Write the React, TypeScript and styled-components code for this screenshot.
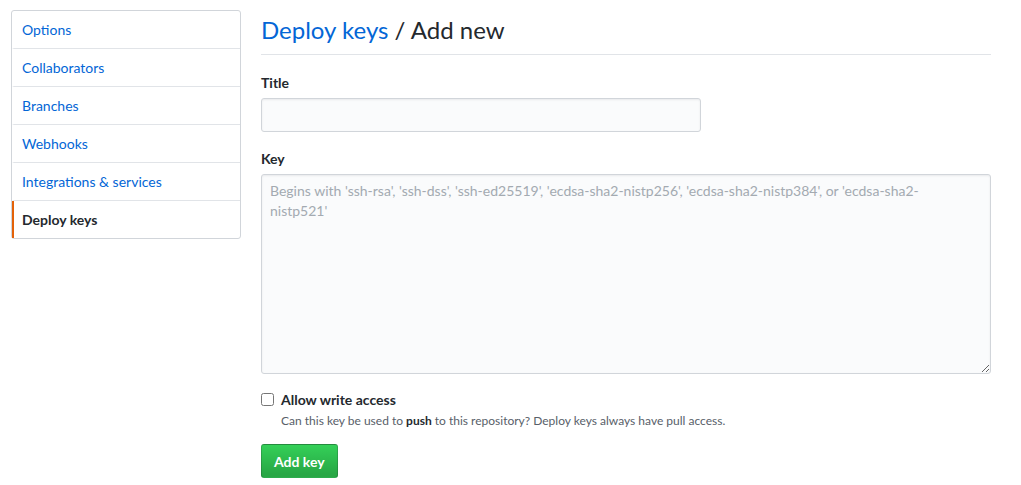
import React from "react";
import styled, { createGlobalStyle } from "styled-components";

const Global = createGlobalStyle`
  html, body { margin: 0; padding: 0; background: #fff; }
  body {
    font-family: Lato, "Noto Sans", Arial, sans-serif;
    font-size: 14px;
    color: #24292e;
  }
  * { box-sizing: border-box; }
`;

const Page = styled.div`
  display: flex;
  align-items: flex-start;
  gap: 20px;
  padding: 10px 30px 0 11px;
  width: 1021px;
`;

const Menu = styled.nav`
  width: 230px;
  flex: none;
  border: 1px solid #d1d5da;
  border-radius: 3px;
  display: flex;
  flex-direction: column;
`;

const MenuItem = styled.a<{ $active?: boolean }>`
  display: block;
  height: 38px;
  line-height: 37px;
  padding: 0 10px 0 8px;
  font-size: 14px;
  text-decoration: none;
  color: ${(p) => (p.$active ? "#24292e" : "#0366d6")};
  font-weight: ${(p) => (p.$active ? 700 : 400)};
  border-bottom: 1px solid #e1e4e8;
  border-left: 2px solid ${(p) => (p.$active ? "#e36209" : "transparent")};
  &:last-child { border-bottom: none; height: 37px; }
`;

const Main = styled.main`
  flex: 1;
  display: flex;
  flex-direction: column;
`;

const Heading = styled.h2`
  margin: 0;
  padding: 4px 0 8px;
  font-size: 24px;
  font-weight: 400;
  line-height: 32px;
  border-bottom: 1px solid #e1e4e8;
  a { color: #0366d6; text-decoration: none; }
`;

const Field = styled.div<{ $gap: number }>`
  margin-top: ${(p) => p.$gap}px;
  display: flex;
  flex-direction: column;
`;

const Label = styled.label`
  font-size: 14px;
  font-weight: 700;
  line-height: 20px;
  margin-bottom: 5px;
`;

const TextInput = styled.input`
  width: 440px;
  height: 34px;
  padding: 6px 8px;
  font: inherit;
  background: #fafbfc;
  border: 1px solid #d1d5da;
  border-radius: 3px;
  box-shadow: inset 0 1px 2px rgba(27, 31, 35, 0.075);
  outline: none;
`;

const TextArea = styled.textarea`
  width: 730px;
  height: 200px;
  padding: 6px 40px 6px 8px;
  font: inherit;
  font-size: 14px;
  line-height: 20px;
  background: #fafbfc;
  border: 1px solid #d1d5da;
  border-radius: 3px;
  box-shadow: inset 0 1px 2px rgba(27, 31, 35, 0.075);
  outline: none;
  resize: vertical;
  &::placeholder { color: #a3aab1; }
`;

const CheckRow = styled.div`
  margin-top: 16px;
  display: grid;
  grid-template-columns: 20px 1fr;
`;

const Check = styled.input`
  margin: 3px 0 0 0;
  width: 13px;
  height: 13px;
`;

const CheckLabel = styled.label`
  font-weight: 700;
  font-size: 14px;
  line-height: 20px;
`;

const Note = styled.p`
  grid-column: 2;
  margin: 2px 0 0;
  font-size: 12px;
  line-height: 18px;
  color: #586069;
  strong { color: #24292e; font-weight: 700; }
`;

const Button = styled.button`
  margin-top: 14px;
  align-self: flex-start;
  height: 34px;
  padding: 0 12px;
  font: inherit;
  font-size: 14px;
  font-weight: 700;
  color: #fff;
  background: linear-gradient(-180deg, #34d058 0%, #28a745 90%);
  border: 1px solid rgba(27, 31, 35, 0.2);
  border-radius: 3px;
`;

const items = ["Options", "Collaborators", "Branches", "Webhooks", "Integrations & services", "Deploy keys"];

export default function App() {
  return (
    <>
      <Global />
      <Page>
        <Menu>
          {items.map((it) => (
            <MenuItem key={it} href="#" $active={it === "Deploy keys"}>
              {it}
            </MenuItem>
          ))}
        </Menu>
        <Main>
          <Heading>
            <a href="#">Deploy keys</a> / Add new
          </Heading>
          <Field $gap={18}>
            <Label htmlFor="title">Title</Label>
            <TextInput id="title" type="text" />
          </Field>
          <Field $gap={17}>
            <Label htmlFor="key">Key</Label>
            <TextArea
              id="key"
              placeholder="Begins with 'ssh-rsa', 'ssh-dss', 'ssh-ed25519', 'ecdsa-sha2-nistp256', 'ecdsa-sha2-nistp384', or 'ecdsa-sha2-nistp521'"
            />
          </Field>
          <CheckRow>
            <Check type="checkbox" id="write" />
            <CheckLabel htmlFor="write">Allow write access</CheckLabel>
            <Note>
              Can this key be used to <strong>push</strong> to this repository? Deploy keys always have pull access.
            </Note>
          </CheckRow>
          <Button type="button">Add key</Button>
        </Main>
      </Page>
    </>
  );
}
